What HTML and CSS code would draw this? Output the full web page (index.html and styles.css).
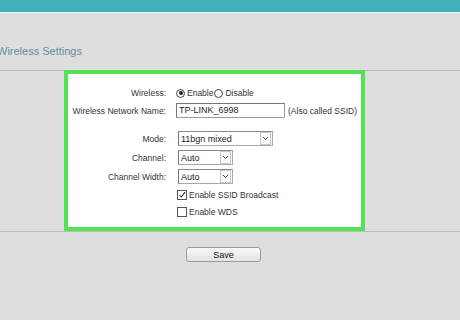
FILE: index.html
```html
<!DOCTYPE html>
<html lang="en">

<head>
    <meta charset="UTF-8" />
    <meta name="viewport" content="width=device-width, initial-scale=1.0" />
    <title>Wireless Settings</title>
    <link rel="stylesheet" href="styles.css">
</head>

<body>
    <div class="topbar"></div>
    <div class="title">Wireless Settings</div>

    <div class="panel">
        <div class="box">
            <div class="row first">
                <span class="label">Wireless:</span>
                <span class="field">
                    <span class="radio on"></span><span class="opt">Enable</span>
                    <span class="radio"></span><span class="opt">Disable</span>
                </span>
            </div>
            <div class="row">
                <span class="label">Wireless Network Name:</span>
                <span class="field">
                    <span class="textbox">TP-LINK_6998</span>
                    <span class="note">(Also called SSID)</span>
                </span>
            </div>
            <div class="row spaced">
                <span class="label">Mode:</span>
                <span class="field">
                    <span class="select wide">11bgn mixed<span class="arrow"><svg width="7" height="5" viewBox="0 0 7 5"><path d="M1 1 L3.5 3.5 L6 1" fill="none" stroke="#555" stroke-width="1"/></svg></span></span>
                </span>
            </div>
            <div class="row">
                <span class="label">Channel:</span>
                <span class="field">
                    <span class="select">Auto<span class="arrow"><svg width="7" height="5" viewBox="0 0 7 5"><path d="M1 1 L3.5 3.5 L6 1" fill="none" stroke="#555" stroke-width="1"/></svg></span></span>
                </span>
            </div>
            <div class="row">
                <span class="label">Channel Width:</span>
                <span class="field">
                    <span class="select">Auto<span class="arrow"><svg width="7" height="5" viewBox="0 0 7 5"><path d="M1 1 L3.5 3.5 L6 1" fill="none" stroke="#555" stroke-width="1"/></svg></span></span>
                </span>
            </div>
            <div class="row short">
                <span class="label"></span>
                <span class="field">
                    <span class="check"><svg width="8" height="8" viewBox="0 0 8 8"><path d="M1.5 4 L3.3 6 L7 1.2" fill="none" stroke="#222" stroke-width="1.1"/></svg></span><span class="opt">Enable SSID Broadcast</span>
                </span>
            </div>
            <div class="row short">
                <span class="label"></span>
                <span class="field">
                    <span class="check"></span><span class="opt">Enable WDS</span>
                </span>
            </div>
        </div>
    </div>

    <div class="actions">
        <button class="save" type="button">Save</button>
    </div>
</body>

</html>
```

FILE: styles.css
```css
body {
    margin: 0;
    background-color: #dedede;
    font-family: "Liberation Sans", Arial, sans-serif;
    font-size: 8.5px;
    color: #333;
    overflow: hidden;
}

.topbar {
    height: 12px;
    background-color: #3fb0bc;
    border-bottom: 1px solid #f2f2f2;
}

.title {
    height: 57px;
    line-height: 20px;
    padding-top: 28px;
    box-sizing: border-box;
    margin-left: -3px;
    font-size: 11px;
    color: #5e8f99;
}

.panel {
    border-top: 1px solid #bcbcbc;
    border-bottom: 1px solid #bcbcbc;
    height: 160px;
}

.box {
    margin-top: -1px;
    margin-left: 64px;
    width: 301px;
    height: 161px;
    box-sizing: border-box;
    border: 4px solid #52e352;
    background-color: #fff;
    padding-top: 11px;
}

.row {
    display: flex;
    align-items: center;
    height: 19px;
}

.row.first {
    height: 16px;
}

.row.spaced {
    margin-top: 9px;
}

.row.short {
    height: 17px;
}

.label {
    width: 98px;
    text-align: right;
    flex-shrink: 0;
}

.field {
    display: flex;
    align-items: center;
    margin-left: 10px;
}

.radio {
    width: 7px;
    height: 7px;
    border: 1px solid #444;
    border-radius: 50%;
    box-sizing: content-box;
    position: relative;
}

.radio.on::after {
    content: "";
    position: absolute;
    left: 1.5px;
    top: 1.5px;
    width: 4px;
    height: 4px;
    border-radius: 50%;
    background-color: #222;
}

.opt {
    margin-left: 2px;
    margin-right: 1px;
}

.textbox {
    width: 105px;
    height: 13px;
    line-height: 13px;
    border: 1px solid #9a9a9a;
    border-top-color: #777;
    border-left-color: #777;
    padding-left: 2px;
    box-sizing: content-box;
    font-size: 9px;
    color: #222;
}

.note {
    margin-left: 3px;
}

.select {
    display: flex;
    align-items: center;
    justify-content: space-between;
    width: 51px;
    height: 13px;
    margin-left: 2px;
    padding-left: 2px;
    border: 1px solid #a8a8a8;
    border-left-color: #777;
    border-top-color: #888;
    font-size: 9px;
    color: #222;
}

.select.wide {
    width: 91px;
}

.arrow {
    display: flex;
    align-items: center;
    justify-content: center;
    width: 9px;
    height: 11px;
    margin-right: 1px;
    border: 1px solid #c8c8c8;
    background-color: #fafafa;
}

.check {
    display: flex;
    align-items: center;
    justify-content: center;
    width: 8px;
    height: 8px;
    border: 1px solid #555;
    margin-left: 1px;
}

.actions {
    display: flex;
    margin-top: 15px;
    padding-left: 186px;
}

.save {
    width: 75px;
    height: 15px;
    padding: 0;
    border: 1px solid #9a9a9a;
    border-radius: 3px;
    background: linear-gradient(#f7f7f7, #e4e4e4);
    font-family: "Liberation Sans", Arial, sans-serif;
    font-size: 9px;
    color: #111;
}
```
